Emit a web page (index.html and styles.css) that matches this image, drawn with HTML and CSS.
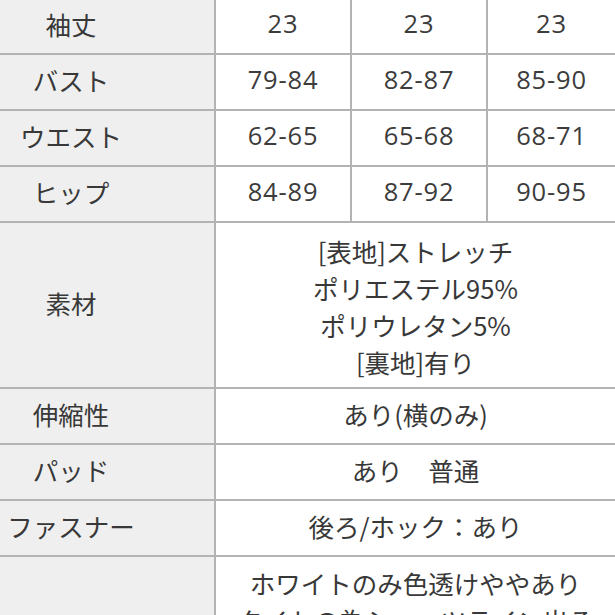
FILE: index.html
```html
<!DOCTYPE html>
<html lang="ja">
<head>
<meta charset="utf-8">
<link rel="stylesheet" href="styles.css">
</head>
<body>
<table class="size-table">
  <colgroup>
    <col class="c-label">
    <col class="c-val">
    <col class="c-val">
    <col class="c-val-last">
  </colgroup>
  <tbody>
    <tr class="row"><th>袖丈</th><td class="num">23</td><td class="num">23</td><td class="num">23</td></tr>
    <tr class="row"><th>バスト</th><td class="num">79-84</td><td class="num">82-87</td><td class="num">85-90</td></tr>
    <tr class="row"><th>ウエスト</th><td class="num">62-65</td><td class="num">65-68</td><td class="num">68-71</td></tr>
    <tr class="row"><th>ヒップ</th><td class="num">84-89</td><td class="num">87-92</td><td class="num">90-95</td></tr>
    <tr class="row-tall"><th>素材</th><td colspan="3" class="jp">[表地]ストレッチ<br>ポリエステル95%<br>ポリウレタン5%<br>[裏地]有り</td></tr>
    <tr class="row"><th>伸縮性</th><td colspan="3" class="jp">あり(横のみ)</td></tr>
    <tr class="row"><th>パッド</th><td colspan="3" class="jp">あり　普通</td></tr>
    <tr class="row"><th>ファスナー</th><td colspan="3" class="jp">後ろ/ホック：あり</td></tr>
    <tr class="row-note"><th></th><td colspan="3" class="jp">ホワイトのみ色透けややあり<br>タイトの為ショーツライン出る</td></tr>
  </tbody>
</table>
</body>
</html>
```

FILE: styles.css
```css
html, body {
  margin: 0;
  padding: 0;
  background: #ffffff;
  overflow: hidden;
}

.size-table {
  border-collapse: collapse;
  table-layout: fixed;
  width: 617px;
  margin: -3px 0 0 -2px;
  font-family: "Open Sans", "Noto Sans CJK JP", sans-serif;
  font-size: 25.5px;
  color: #383838;
}

.c-label { width: 216px; }
.c-val { width: 136px; }
.c-val-last { width: 129px; }

.size-table th,
.size-table td {
  border: 2px solid #b3b3b3;
  text-align: center;
  vertical-align: middle;
  padding: 0 0 5px 0;
  font-weight: normal;
  line-height: 37px;
}

.size-table th {
  background: #efefef;
  padding-right: 72px;
  font-family: "Noto Sans CJK JP", sans-serif;
}

.size-table td.num {
  letter-spacing: 0.8px;
  color: #3c3c3c;
}

.size-table td.jp {
  font-family: "Noto Sans CJK JP", sans-serif;
}

.row th, .row td {
  height: 49px;
}

.row-tall th, .row-tall td {
  height: 159px;
}

.row-tall td {
  padding: 5px 0 3px 0;
  height: 156px;
}

.row-note td {
  padding-top: 7px;
  padding-bottom: 9px;
}
```
